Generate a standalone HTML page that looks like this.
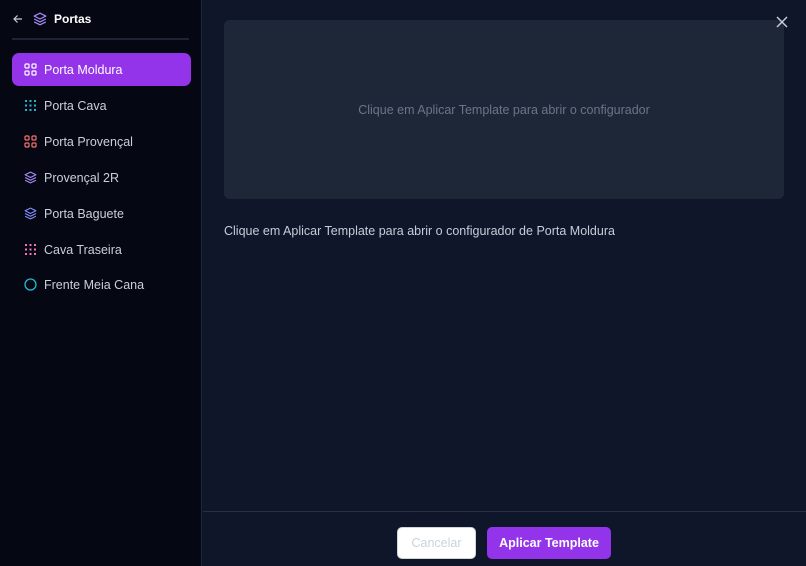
<!DOCTYPE html>
<html><head><meta charset="utf-8"><style>
*{box-sizing:border-box;margin:0;padding:0}
body{width:806px;height:566px;overflow:hidden;font-family:"Liberation Sans",sans-serif;background:#0f1629;position:relative}
.side{position:absolute;left:0;top:0;width:202px;height:566px;background:#050813;border-right:1px solid #1e2638}
.hdr{position:absolute;left:12px;top:10px;height:18px;display:flex;align-items:center;color:#fff;font-weight:bold;font-size:12px}
.sep{position:absolute;left:12px;right:12px;top:38px;height:2px;background:#1c2435}
.item{position:absolute;left:12px;width:179px;height:33px;border-radius:7px;display:flex;align-items:center;padding-left:12px;font-size:12.5px;color:#c9cfdb}
.item svg{margin-right:7px}
.act{background:#9333ea;color:#fff}
.card{position:absolute;left:224px;top:20px;width:560px;height:179px;background:#1e2738;border-radius:6px;display:flex;align-items:center;justify-content:center;color:#6b7588;font-size:12.5px}
.desc{position:absolute;left:224px;top:224px;color:#c5ccd8;font-size:12.5px}
.foot{position:absolute;left:203px;right:0;top:511px;height:1px;background:#273043}
.btn{position:absolute;top:527px;height:32px;border-radius:5px;font-size:12.5px;display:flex;align-items:center;justify-content:center}
.x{position:absolute;left:775px;top:15px;width:14px;height:14px;z-index:5}
</style></head><body>
<div class="side">
<div class="hdr">
<svg width="12" height="12" viewBox="0 0 12 12" fill="none" stroke="#c9cfdb" stroke-width="1.2"><path d="M10 6H2M5.5 2.5L2 6l3.5 3.5"/></svg>
<svg style="margin-left:9px;margin-right:7px" width="14" height="14" viewBox="0 0 24 24" fill="none" stroke="#a78bfa" stroke-width="2" stroke-linejoin="round"><path d="M12 2L2 7l10 5 10-5-10-5z"/><path d="M2 12l10 5 10-5"/><path d="M2 17l10 5 10-5"/></svg>
Portas</div>
<div class="sep"></div>
<div class="item act" style="top:53px"><svg width="13" height="13" viewBox="0 0 13 13" fill="none" stroke="#fff" stroke-width="1.2"><rect x="1" y="1" width="4" height="4" rx="1"/><rect x="8" y="1" width="4" height="4" rx="1"/><rect x="1" y="8" width="4" height="4" rx="1"/><rect x="8" y="8" width="4" height="4" rx="1"/></svg>Porta Moldura</div>
<div class="item" style="top:89px"><svg width="13" height="13" viewBox="0 0 13 13" fill="#22b8cf"><rect x="1" y="1" width="2" height="2"/><rect x="5.5" y="1" width="2" height="2"/><rect x="10" y="1" width="2" height="2"/><rect x="1" y="5.5" width="2" height="2"/><rect x="5.5" y="5.5" width="2" height="2"/><rect x="10" y="5.5" width="2" height="2"/><rect x="1" y="10" width="2" height="2"/><rect x="5.5" y="10" width="2" height="2"/><rect x="10" y="10" width="2" height="2"/></svg>Porta Cava</div>
<div class="item" style="top:125px"><svg width="13" height="13" viewBox="0 0 13 13" fill="none" stroke="#f87171" stroke-width="1.2"><rect x="1" y="1" width="4" height="4" rx="1"/><rect x="8" y="1" width="4" height="4" rx="1"/><rect x="1" y="8" width="4" height="4" rx="1"/><rect x="8" y="8" width="4" height="4" rx="1"/></svg>Porta Provençal</div>
<div class="item" style="top:161px"><svg width="13" height="13" viewBox="0 0 24 24" fill="none" stroke="#a78bfa" stroke-width="2" stroke-linejoin="round"><path d="M12 2L2 7l10 5 10-5-10-5z"/><path d="M2 12l10 5 10-5"/><path d="M2 17l10 5 10-5"/></svg>Provençal 2R</div>
<div class="item" style="top:197px"><svg width="13" height="13" viewBox="0 0 24 24" fill="none" stroke="#818cf8" stroke-width="2" stroke-linejoin="round"><path d="M12 2L2 7l10 5 10-5-10-5z"/><path d="M2 12l10 5 10-5"/><path d="M2 17l10 5 10-5"/></svg>Porta Baguete</div>
<div class="item" style="top:233px"><svg width="13" height="13" viewBox="0 0 13 13" fill="#f472b6"><rect x="1" y="1" width="2" height="2"/><rect x="5.5" y="1" width="2" height="2"/><rect x="10" y="1" width="2" height="2"/><rect x="1" y="5.5" width="2" height="2"/><rect x="5.5" y="5.5" width="2" height="2"/><rect x="10" y="5.5" width="2" height="2"/><rect x="1" y="10" width="2" height="2"/><rect x="5.5" y="10" width="2" height="2"/><rect x="10" y="10" width="2" height="2"/></svg>Cava Traseira</div>
<div class="item" style="top:268px"><svg width="13" height="13" viewBox="0 0 13 13" fill="none" stroke="#22b8cf" stroke-width="1.3"><circle cx="6.5" cy="6.5" r="5.5"/></svg>Frente Meia Cana</div>
</div>
<div class="card">Clique em Aplicar Template para abrir o configurador</div>
<div class="x"><svg width="14" height="14" viewBox="0 0 14 14" fill="none" stroke="#c9cfdb" stroke-width="1.4"><line x1="2" y1="2" x2="12" y2="12"/><line x1="12" y1="2" x2="2" y2="12"/></svg></div>
<div class="desc">Clique em Aplicar Template para abrir o configurador de Porta Moldura</div>
<div class="foot"></div>
<div class="btn" style="left:397px;width:79px;background:#fff;color:#cbd2dc;border:1px solid #d1d5db">Cancelar</div>
<div class="btn" style="left:487px;width:124px;background:#9333ea;color:#fff;font-weight:bold">Aplicar Template</div>
</body></html>
